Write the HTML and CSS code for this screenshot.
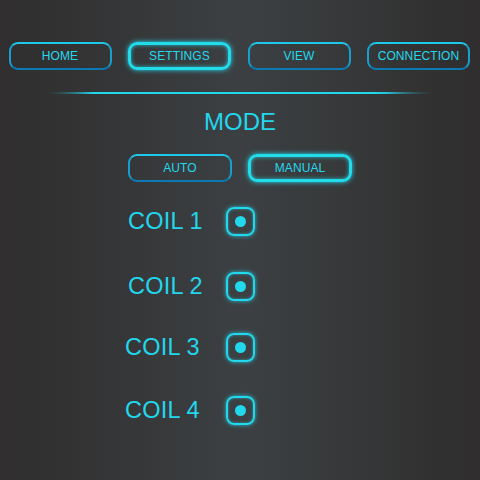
FILE: index.html
```html
<!DOCTYPE html>
<html>
<head>
<meta charset="utf-8">
<link rel="stylesheet" href="styles.css">
</head>
<body>
<div class="panel">
  <nav class="nav">
    <div class="btn">HOME</div>
    <div class="btn btn-active">SETTINGS</div>
    <div class="btn">VIEW</div>
    <div class="btn">CONNECTION</div>
  </nav>
  <div class="divider"></div>
  <div class="title">MODE</div>
  <div class="mode">
    <div class="btn">AUTO</div>
    <div class="btn btn-active">MANUAL</div>
  </div>
  <div class="coils">
    <div class="coil coil-1"><span class="label">COIL 1</span><span class="check"><span class="dot"></span></span></div>
    <div class="coil coil-2"><span class="label">COIL 2</span><span class="check"><span class="dot"></span></span></div>
    <div class="coil coil-3 shift"><span class="label">COIL 3</span><span class="check"><span class="dot"></span></span></div>
    <div class="coil coil-4 shift"><span class="label">COIL 4</span><span class="check"><span class="dot"></span></span></div>
  </div>
</div>
</body>
</html>
```
FILE: styles.css
```css
html, body {
  margin: 0;
  padding: 0;
  width: 480px;
  height: 480px;
  overflow: hidden;
}
body {
  font-family: "Liberation Sans", Arial, sans-serif;
  color: #22d6ec;
}
.panel {
  display: flex;
  flex-direction: column;
  height: 480px;
  background: linear-gradient(to right, #302e2e 0%, #353637 25%, #3c4043 50%, #37393a 70%, #2f2d2d 100%);
}
.nav {
  display: flex;
  gap: 16.5px;
  padding-top: 42px;
  padding-left: 8.5px;
}
.btn {
  box-sizing: border-box;
  width: 103px;
  height: 28px;
  border: 2px solid #169fd0;
  border-top-color: #1ec8e8;
  border-bottom-color: #0b7ab4;
  border-radius: 9px;
  display: flex;
  align-items: center;
  justify-content: center;
  font-size: 12px;
  color: #24d8ee;
  letter-spacing: 0.1px;
}
.btn-active {
  border: 3px solid #22dcec;
  box-shadow: 0 0 5px #22dcec, inset 0 0 4px rgba(34, 220, 236, 0.8);
}
.divider {
  align-self: center;
  width: 386px;
  height: 2px;
  margin-top: 22px;
  background: linear-gradient(to right, rgba(34, 214, 236, 0.35), #22d6ec 12%, #22d6ec 85%, rgba(34, 214, 236, 0.35));
  clip-path: polygon(0 50%, 12% 0, 88% 0, 100% 50%, 88% 100%, 12% 100%);
}
.title {
  margin-top: 14px;
  text-align: center;
  font-size: 24px;
  line-height: 28px;
}
.mode {
  display: flex;
  justify-content: center;
  gap: 16px;
  margin-top: 18px;
}
.mode .btn {
  width: 104px;
}
.coils {
  display: flex;
  flex-direction: column;
}
.coil {
  display: grid;
  grid-template-columns: 226px 29px;
  align-items: center;
  height: 28px;
}
.label {
  font-size: 23.5px;
  letter-spacing: 0.2px;
  padding-left: 128px;
}
.shift .label {
  padding-left: 125px;
}
.coil-1 { margin-top: 25px; }
.coil-2 { margin-top: 37px; }
.coil-3 { margin-top: 33px; }
.coil-4 { margin-top: 35px; }
.check {
  box-sizing: border-box;
  width: 29px;
  height: 29px;
  border: 2px solid #22d8ec;
  border-radius: 8px;
  box-shadow: 0 0 4px rgba(34, 216, 236, 0.8), inset 0 0 3px rgba(34, 216, 236, 0.6);
  display: flex;
  align-items: center;
  justify-content: center;
}
.dot {
  width: 11px;
  height: 11px;
  border-radius: 50%;
  background: #22d8ec;
}
```
